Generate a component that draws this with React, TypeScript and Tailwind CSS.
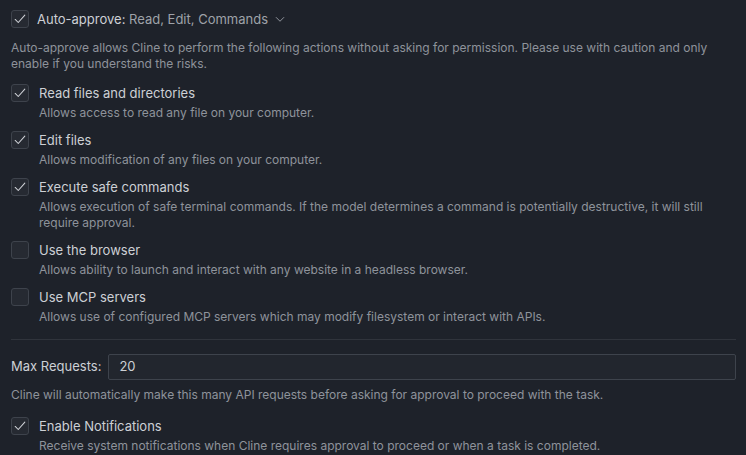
import React from "react";

const Check = () => (
  <svg width="14" height="14" viewBox="0 0 16 16" fill="none">
    <path d="M2.5 8.5L6 12L13.5 3.5" stroke="#d0d3d8" strokeWidth="1.2" strokeLinecap="round" strokeLinejoin="round" />
  </svg>
);

const Box = ({ checked }: { checked: boolean }) => (
  <div className="w-[18px] h-[18px] shrink-0 rounded-[3px] border border-[#3e434c] bg-[#262a32] flex items-center justify-center">
    {checked && <Check />}
  </div>
);

const items = [
  { label: "Read files and directories", desc: ["Allows access to read any file on your computer."], on: true },
  { label: "Edit files", desc: ["Allows modification of any files on your computer."], on: true },
  {
    label: "Execute safe commands",
    desc: [
      "Allows execution of safe terminal commands. If the model determines a command is potentially destructive, it will still",
      "require approval.",
    ],
    on: true,
  },
  { label: "Use the browser", desc: ["Allows ability to launch and interact with any website in a headless browser."], on: false },
  { label: "Use MCP servers", desc: ["Allows use of configured MCP servers which may modify filesystem or interact with APIs."], on: false },
];

const Item = ({ label, desc, on }: { label: string; desc: string[]; on: boolean }) => (
  <div>
    <div className="flex items-center gap-[10px]">
      <Box checked={on} />
      <span className="text-[13px] leading-[18px] text-[#cdd0d5]">{label}</span>
    </div>
    <div className="ml-[28px] mt-[3px] text-[12px] leading-[16px] text-[#8e939b]">
      {desc.map((d, i) => (
        <div key={i}>{d}</div>
      ))}
    </div>
  </div>
);

export default function App() {
  return (
    <div
      className="w-[746px] h-[455px] overflow-hidden bg-[#1e222a] pl-[11px] pr-[10px] pt-[10px]"
      style={{ fontFamily: "Inter, 'Noto Sans', sans-serif" }}
    >
      <div className="flex items-center">
        <Box checked />
        <span className="ml-[8px] text-[13px] leading-[18px] text-[#cdd0d5]">
          Auto-approve: <span className="text-[#9ea2a9]">Read, Edit, Commands</span>
        </span>
        <svg width="12" height="12" viewBox="0 0 16 16" fill="none" className="ml-[6px]">
          <path d="M3 6L8 11L13 6" stroke="#9ea2a9" strokeWidth="1.2" strokeLinecap="round" strokeLinejoin="round" />
        </svg>
      </div>
      <div className="mt-[12px] text-[12px] leading-[16px] text-[#8e939b]">
        <div>
          Auto-approve allows Cline to perform the following actions without asking for permission. Please use with caution and only
        </div>
        <div>enable if you understand the risks.</div>
      </div>

      <div className="mt-[12px] flex flex-col gap-[10px]">
        {items.map((it) => (
          <Item key={it.label} {...it} />
        ))}
      </div>

      <div className="mt-[14px] h-px bg-[#30343c]" />

      <div className="mt-[14px] flex items-center gap-[7px]">
        <span className="text-[13px] text-[#cdd0d5]">Max Requests:</span>
        <div className="flex-1 h-[26px] rounded-[2px] border border-[#3e434c] bg-[#22262e] px-[10px] flex items-center text-[13px] text-[#cdd0d5]">
          20
        </div>
      </div>
      <div className="mt-[7px] text-[12px] leading-[16px] text-[#8e939b]">
        Cline will automatically make this many API requests before asking for approval to proceed with the task.
      </div>

      <div className="mt-[14px]">
        <Item
          label="Enable Notifications"
          desc={["Receive system notifications when Cline requires approval to proceed or when a task is completed."]}
          on
        />
      </div>
    </div>
  );
}
